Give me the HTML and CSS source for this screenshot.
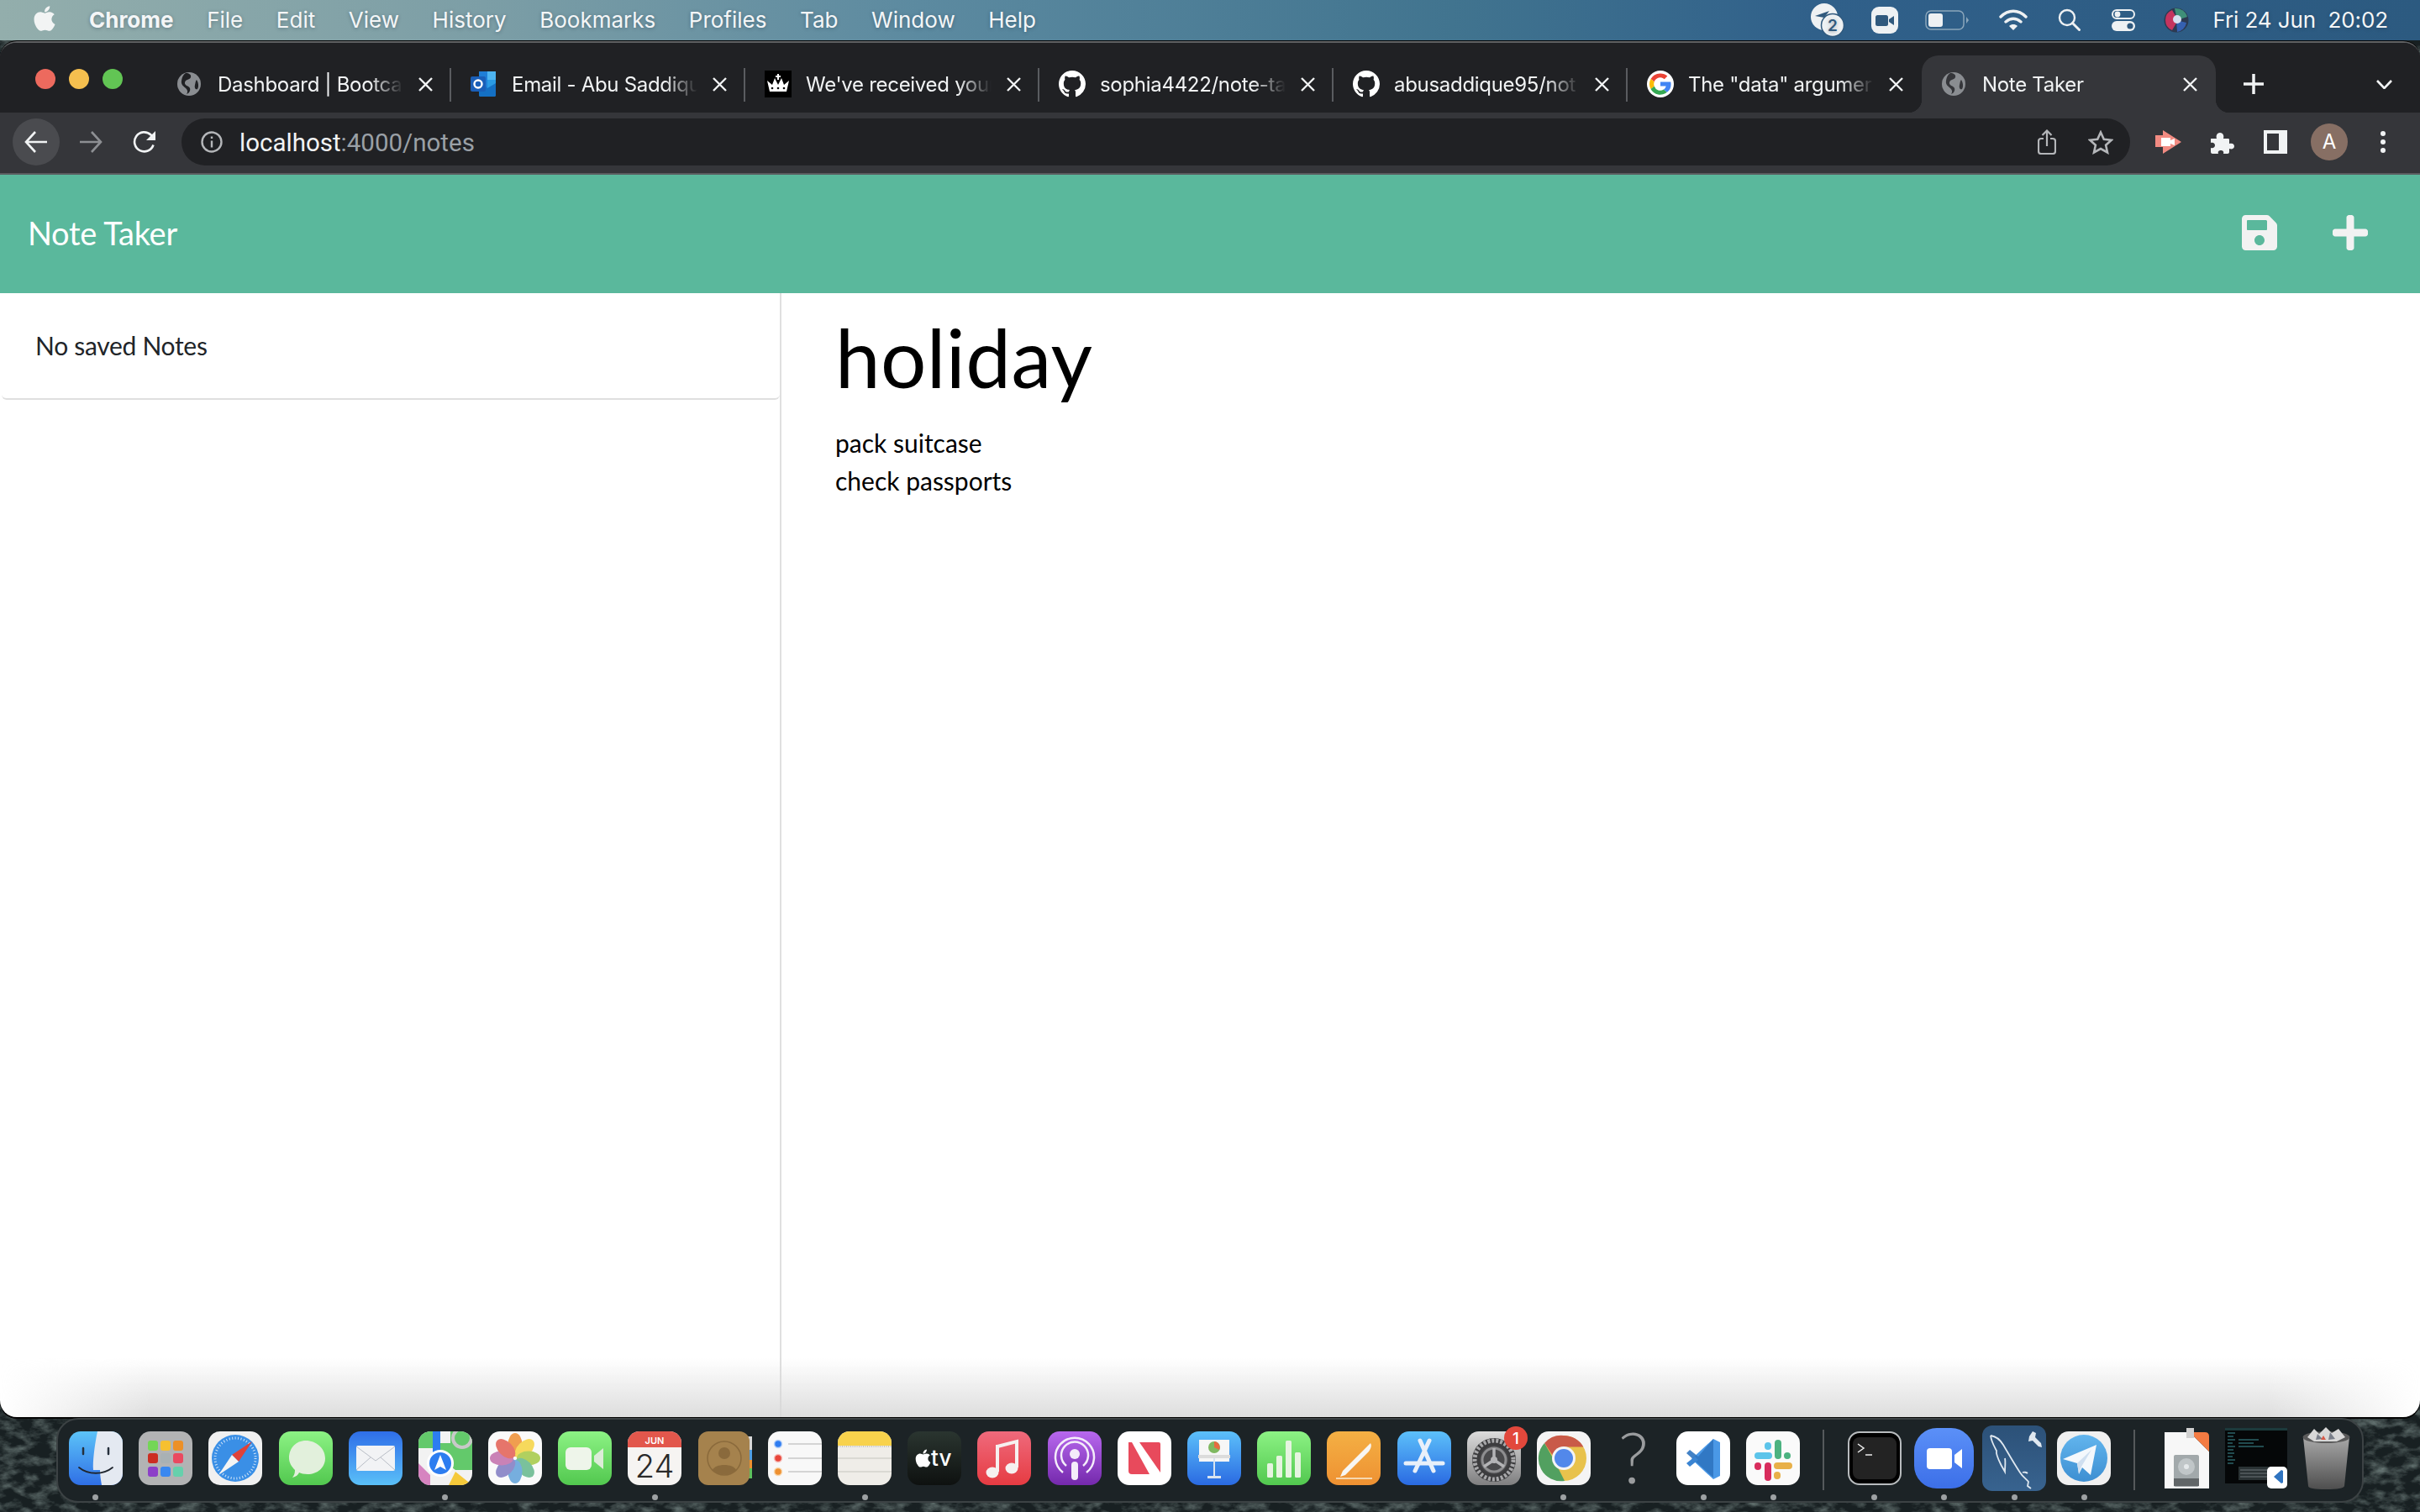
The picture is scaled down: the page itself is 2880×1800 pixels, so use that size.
FILE: index.html
```html
<!DOCTYPE html>
<html lang="en">
<head>
  <meta charset="UTF-8" />
  <title>Note Taker</title>
  <link rel="stylesheet" href="styles.css">
</head>
<body>
  <svg class="svg-defs" aria-hidden="true">
    <defs>
      <clipPath id="squircle"><rect width="64" height="64" rx="14"/></clipPath>
      <linearGradient id="gFinder" x1="0" y1="0" x2="0" y2="1"><stop offset="0" stop-color="#5cc3f8"/><stop offset="1" stop-color="#2f6fe6"/></linearGradient>
      <linearGradient id="gGreen" x1="0" y1="0" x2="0" y2="1"><stop offset="0" stop-color="#8cf284"/><stop offset="1" stop-color="#52c84f"/></linearGradient>
      <linearGradient id="gMail" x1="0" y1="0" x2="0" y2="1"><stop offset="0" stop-color="#2f6ee8"/><stop offset="1" stop-color="#5ac0f8"/></linearGradient>
      <linearGradient id="gMusic" x1="0" y1="0" x2="0" y2="1"><stop offset="0" stop-color="#ef6a7c"/><stop offset="1" stop-color="#e63b42"/></linearGradient>
      <linearGradient id="gPod" x1="0" y1="0" x2="0" y2="1"><stop offset="0" stop-color="#b868ee"/><stop offset="1" stop-color="#7429ac"/></linearGradient>
      <linearGradient id="gBlue" x1="0" y1="0" x2="0" y2="1"><stop offset="0" stop-color="#5cc0fa"/><stop offset="1" stop-color="#2a6ae2"/></linearGradient>
      <linearGradient id="gOrange" x1="0" y1="0" x2="0" y2="1"><stop offset="0" stop-color="#f4b044"/><stop offset="1" stop-color="#ee9132"/></linearGradient>
      <linearGradient id="gGray" x1="0" y1="0" x2="0" y2="1"><stop offset="0" stop-color="#dcdcdc"/><stop offset="1" stop-color="#7f7f80"/></linearGradient>
      <linearGradient id="gTv" x1="0" y1="0" x2="0" y2="1"><stop offset="0" stop-color="#2a3530"/><stop offset="1" stop-color="#0e1110"/></linearGradient>
      <linearGradient id="gZoom" x1="0" y1="0" x2="0" y2="1"><stop offset="0" stop-color="#5b90f8"/><stop offset="1" stop-color="#3c6fe8"/></linearGradient>
      <linearGradient id="gMysql" x1="0" y1="0" x2="0" y2="1"><stop offset="0" stop-color="#2c5178"/><stop offset="1" stop-color="#38638f"/></linearGradient>
      <linearGradient id="gTele" x1="0" y1="0" x2="0" y2="1"><stop offset="0" stop-color="#62b5ee"/><stop offset="1" stop-color="#3d8fd2"/></linearGradient>
      <linearGradient id="gTrash" x1="0" y1="0" x2="0" y2="1"><stop offset="0" stop-color="#a8a8a8"/><stop offset="1" stop-color="#4e4e4e"/></linearGradient>
      <filter id="rough" x="0" y="0" width="100%" height="100%"><feTurbulence type="fractalNoise" baseFrequency="0.05 0.09" numOctaves="4" seed="7"/><feColorMatrix values="0 0 0 0 0.19  0 0 0 0 0.25  0 0 0 0 0.24  1.7 0 0 0 -0.7"/></filter>
    </defs>
  </svg>

  <svg class="wallpaper" aria-hidden="true"><rect width="100%" height="100%" filter="url(#rough)"/></svg>

  <div class="desktop">
    <header class="menubar">
      <svg class="apple" viewBox="0 0 384 512"><path fill="#f2f4f4" d="M318.7 268.7c-.2-36.7 16.4-64.4 50-84.8-18.8-26.9-47.2-41.7-84.7-44.6-35.5-2.8-74.3 20.7-88.5 20.7-15 0-49.4-19.7-76.4-19.7C63.3 141.2 4 184.8 4 273.5q0 39.3 14.4 81.2c12.8 36.7 59 126.7 107.2 125.2 25.2-.6 43-17.9 75.8-17.9 31.8 0 48.3 17.9 76.4 17.9 48.6-.7 90.4-82.5 102.6-119.3-65.2-30.7-61.7-90-61.7-91.9zm-56.6-164.2c27.3-32.4 24.8-61.9 24-72.5-24.1 1.4-52 16.4-67.9 34.9-17.5 19.8-27.8 44.3-25.6 71.9 26.1 2 49.9-11.4 69.5-34.3z"/></svg>
      <nav class="menu">
        <span class="menu-app">Chrome</span>
        <span>File</span>
        <span>Edit</span>
        <span>View</span>
        <span>History</span>
        <span>Bookmarks</span>
        <span>Profiles</span>
        <span>Tab</span>
        <span>Window</span>
        <span>Help</span>
      </nav>
      <div class="status">
        <svg class="st-badge" viewBox="0 0 40 40"><circle cx="16" cy="16" r="16" fill="#eef1f3"/><path d="M5 15l17-6-6 8z" fill="#30597d"/><circle cx="26" cy="26" r="13.5" fill="#eef1f3" stroke="#30597d" stroke-width="1.5"/><text x="26" y="33" class="st-badge-num">2</text></svg>
        <svg class="st-zoom" viewBox="0 0 32 32"><rect width="32" height="32" rx="9" fill="#eef1f3"/><rect x="5" y="10" width="15" height="13" rx="2.5" fill="#30597d"/><path d="M21 15l6-4v11l-6-4z" fill="#30597d"/></svg>
        <svg class="st-battery" viewBox="0 0 52 24"><rect x="1" y="1" width="45" height="22" rx="6" fill="none" stroke="#8ba6bb" stroke-width="1.5"/><rect x="4" y="4" width="17" height="16" rx="3" fill="#eef1f3"/><path d="M49 8l3 4-3 4z" fill="#8ba6bb"/></svg>
        <svg class="st-wifi" viewBox="0 0 34 26"><path d="M2 9C11 0 23 0 32 9M8 15c6-5 12-5 18 0" fill="none" stroke="#eef1f3" stroke-width="3.4" stroke-linecap="round"/><path d="M12 20c3-2.6 7-2.6 10 0l-5 5z" fill="#eef1f3"/></svg>
        <svg class="st-search" viewBox="0 0 27 27"><circle cx="11" cy="11" r="9" fill="none" stroke="#eef1f3" stroke-width="2.4"/><path d="M17.5 17.5l8 8" stroke="#eef1f3" stroke-width="3" stroke-linecap="round"/></svg>
        <svg class="st-control" viewBox="0 0 28 26"><rect x="1" y="1" width="26" height="10" rx="5" fill="none" stroke="#eef1f3" stroke-width="2"/><circle cx="7" cy="6" r="3.4" fill="#eef1f3"/><rect y="14" width="28" height="12" rx="6" fill="#eef1f3"/><circle cx="22" cy="20" r="3.6" fill="#30597d"/></svg>
        <svg class="st-siri" viewBox="0 0 30 30"><circle cx="15" cy="15" r="14.5" fill="#2c3a52"/><path d="M2 15a13 13 0 0 1 8-12l7 12-7 12a13 13 0 0 1-8-12z" fill="#c6345f"/><path d="M13 1a14 14 0 0 1 15 10l-12 4z" fill="#3f8f78"/><path d="M15 15l12 3a13 13 0 0 1-11 11z" fill="#3560b0"/><circle cx="16" cy="14" r="5" fill="#d8dff0"/></svg>
        <span class="clock">Fri 24 Jun&nbsp; 20:02</span>
      </div>
    </header>

    <main class="window">
      <div class="tabstrip">
        <div class="lights"><i class="light-red"></i><i class="light-yellow"></i><i class="light-green"></i></div>
        <div class="tab">
          <svg class="fav fav-globe" viewBox="0 0 28 28"><circle cx="14" cy="14" r="14" fill="#8a8d91"/><path d="M10 1c4 0 7 2 6 5s-6 2-7 6 5 4 6 7-1 6-4 7c2-3 1-5-1-7S4 15 5 10s2-7 5-9zM23 9c2 3 3 8 1 11-2 1-4-1-3-5s1-5 2-6z" fill="#202124"/></svg>
          <span class="tab-title">Dashboard | Bootca</span>
          <svg class="tab-x" viewBox="0 0 17 17"><path d="M1 1l15 15M16 1L1 16"/></svg>
        </div>
        <div class="tab">
          <svg class="fav" viewBox="0 0 32 32"><path d="M10 1h20v28a2 2 0 0 1-2 2H12a2 2 0 0 1-2-2z" fill="#1f7ed6"/><path d="M20 1h10v10H20z" fill="#4db4f0"/><path d="M20 11h10v10H20z" fill="#2a9be4"/><path d="M10 11l10 10 10-6v14a2 2 0 0 1-2 2H12a2 2 0 0 1-2-2z" fill="#1470c4"/><rect y="7" width="18" height="18" rx="2" fill="#1a5fb8"/><circle cx="9" cy="16" r="4.5" fill="none" stroke="#fff" stroke-width="2.4"/></svg>
          <span class="tab-title">Email - Abu Saddiqu</span>
          <svg class="tab-x" viewBox="0 0 17 17"><path d="M1 1l15 15M16 1L1 16"/></svg>
        </div>
        <div class="tab">
          <svg class="fav" viewBox="0 0 32 32"><rect width="32" height="32" fill="#000"/><path d="M6 25l-3-13 6 5 3-8 4 8 4-8 3 8 6-5-3 13z" fill="#fff"/><path d="M15 4h2v2h2v2h-2v3h-2V8h-2V6h2z" fill="#fff"/><circle cx="9" cy="21" r="1.3"/><circle cx="16" cy="21" r="1.3"/><circle cx="23" cy="21" r="1.3"/></svg>
          <span class="tab-title">We've received your</span>
          <svg class="tab-x" viewBox="0 0 17 17"><path d="M1 1l15 15M16 1L1 16"/></svg>
        </div>
        <div class="tab">
          <svg class="fav" viewBox="0 0 16 16"><path fill="#fff" d="M8 0C3.58 0 0 3.58 0 8c0 3.54 2.29 6.53 5.47 7.59.4.07.55-.17.55-.38 0-.19-.01-.82-.01-1.49-2.01.37-2.53-.49-2.69-.94-.09-.23-.48-.94-.82-1.13-.28-.15-.68-.52-.01-.53.63-.01 1.08.58 1.23.82.72 1.21 1.87.87 2.33.66.07-.52.28-.87.51-1.07-1.78-.2-3.64-.89-3.64-3.95 0-.87.31-1.59.82-2.15-.08-.2-.36-1.02.08-2.12 0 0 .67-.21 2.2.82.64-.18 1.32-.27 2-.27.68 0 1.36.09 2 .27 1.53-1.04 2.2-.82 2.2-.82.44 1.1.16 1.92.08 2.12.51.56.82 1.27.82 2.15 0 3.07-1.87 3.75-3.65 3.95.29.25.54.73.54 1.48 0 1.07-.01 1.93-.01 2.2 0 .21.15.46.55.38A8.013 8.013 0 0016 8c0-4.42-3.58-8-8-8z"/></svg>
          <span class="tab-title">sophia4422/note-ta</span>
          <svg class="tab-x" viewBox="0 0 17 17"><path d="M1 1l15 15M16 1L1 16"/></svg>
        </div>
        <div class="tab">
          <svg class="fav" viewBox="0 0 16 16"><path fill="#fff" d="M8 0C3.58 0 0 3.58 0 8c0 3.54 2.29 6.53 5.47 7.59.4.07.55-.17.55-.38 0-.19-.01-.82-.01-1.49-2.01.37-2.53-.49-2.69-.94-.09-.23-.48-.94-.82-1.13-.28-.15-.68-.52-.01-.53.63-.01 1.08.58 1.23.82.72 1.21 1.87.87 2.33.66.07-.52.28-.87.51-1.07-1.78-.2-3.64-.89-3.64-3.95 0-.87.31-1.59.82-2.15-.08-.2-.36-1.02.08-2.12 0 0 .67-.21 2.2.82.64-.18 1.32-.27 2-.27.68 0 1.36.09 2 .27 1.53-1.04 2.2-.82 2.2-.82.44 1.1.16 1.92.08 2.12.51.56.82 1.27.82 2.15 0 3.07-1.87 3.75-3.65 3.95.29.25.54.73.54 1.48 0 1.07-.01 1.93-.01 2.2 0 .21.15.46.55.38A8.013 8.013 0 0016 8c0-4.42-3.58-8-8-8z"/></svg>
          <span class="tab-title">abusaddique95/not</span>
          <svg class="tab-x" viewBox="0 0 17 17"><path d="M1 1l15 15M16 1L1 16"/></svg>
        </div>
        <div class="tab tab-nosep">
          <svg class="fav" viewBox="0 0 32 32"><circle cx="16" cy="16" r="16" fill="#fff"/><g transform="translate(16 16) scale(1.4) translate(-16 -16)"><path d="M16 7a9 9 0 0 1 6 2.3l-2.6 2.6A5.4 5.4 0 0 0 10.800 14L7.800 11.800A9 9 0 0 1 16 7z" fill="#ea4335"/><path d="M7.800 11.800l3 2.200a5.400 5.400 0 0 0 0 4l-3 2.300a9 9 0 0 1 0-8.500z" fill="#fbbc05"/><path d="M10.800 18a5.400 5.400 0 0 0 8 2.700l2.900 2.200A9 9 0 0 1 7.800 20.300z" fill="#34a853"/><path d="M25 16.500c0 2.700-1.200 5-3.300 6.400l-2.900-2.200a5 5 0 0 0 2-3H16v-3.500h8.800c.1.700.2 1.500.2 2.300z" fill="#4285f4"/></g></svg>
          <span class="tab-title">The "data" argumer</span>
          <svg class="tab-x" viewBox="0 0 17 17"><path d="M1 1l15 15M16 1L1 16"/></svg>
        </div>
        <div class="tab tab-active">
          <svg class="fav fav-globe" viewBox="0 0 28 28"><circle cx="14" cy="14" r="14" fill="#8a8d91"/><path d="M10 1c4 0 7 2 6 5s-6 2-7 6 5 4 6 7-1 6-4 7c2-3 1-5-1-7S4 15 5 10s2-7 5-9zM23 9c2 3 3 8 1 11-2 1-4-1-3-5s1-5 2-6z" fill="#35363a"/></svg>
          <span class="tab-title">Note Taker</span>
          <svg class="tab-x" viewBox="0 0 17 17"><path d="M1 1l15 15M16 1L1 16"/></svg>
        </div>
        <svg class="newtab" viewBox="0 0 24 24"><path d="M12 0v24M0 12h24"/></svg>
        <svg class="tabmenu" viewBox="0 0 19 11"><path d="M1 1l8.500 9L18 1"/></svg>
      </div>

      <div class="toolbar">
        <span class="nav-back"><svg class="nav-icon" viewBox="0 0 28 26"><path d="M27 13H3M13 1L2 13l11 12"/></svg></span>
        <svg class="nav-icon nav-fwd" viewBox="0 0 28 26"><path d="M1 13h24M15 1l11 12-11 12"/></svg>
        <svg class="nav-icon nav-reload" viewBox="0 0 28 28"><path d="M24.500 17.500A11.500 11.500 0 1 1 21.500 5.500L25 9"/><path class="solid" d="M27 1v11H16z"/></svg>
        <div class="omnibox">
          <svg class="info" viewBox="0 0 26 26"><circle cx="13" cy="13" r="11.500"/><path d="M13 11.500v8M13 6.500v2.500"/></svg>
          <span class="url">localhost<span class="url-dim">:4000/notes</span></span>
          <svg class="omni-share" viewBox="0 0 22 30"><path d="M7 11H4a3 3 0 0 0-3 3v12a3 3 0 0 0 3 3h14a3 3 0 0 0 3-3V14a3 3 0 0 0-3-3h-3M11 20V2M5.500 7L11 1.500 16.500 7"/></svg>
          <svg class="omni-star" viewBox="0 0 30 29"><path d="M15 2.500l3.800 8.200 9 1-6.700 6 1.900 8.800-8-4.500-8 4.500 1.900-8.800-6.700-6 9-1z"/></svg>
        </div>
        <svg class="ext-video" viewBox="0 0 32 28"><path d="M10 6h-9v14h9z" fill="#f28b82"/><path d="M10 0l22 14-22 14z" fill="#f28b82"/><rect x="8" y="9" width="11" height="10" fill="#fff"/><path d="M19 12l5-2v8l-5-2z" fill="#fff"/></svg>
        <svg class="ext-puzzle" viewBox="0 0 30 30"><path fill="#f1f3f4" d="M2 11h6c-1-3 0-7 4-7s5 4 4 7h6c1 0 1 1 1 2v4c3-1 6 0 6 3s-3 4-6 3v4c0 1-1 2-2 2h-5c1-3-1-4-3-4s-4 1-3 4H3c-1 0-2-1-2-2v-5c3 1 5-1 5-3s-2-4-5-3v-4c0-1 0-1 1-1z"/></svg>
        <svg class="ext-side" viewBox="0 0 28 28"><path fill="#f1f3f4" d="M0 0h28v28H0zM4 4v20h14V4z" fill-rule="evenodd"/></svg>
        <span class="avatar">A</span>
        <svg class="kebab" viewBox="0 0 6 26"><circle cx="3" cy="3" r="3"/><circle cx="3" cy="13" r="3"/><circle cx="3" cy="23" r="3"/></svg>
      </div>

      <div class="page">
        <div class="navbar">
          <a class="navbar-brand">Note Taker</a>
          <div class="navbar-icons">
            <svg class="icon-save" viewBox="0 0 448 512"><path d="M433.941 129.941l-83.882-83.882A48 48 0 0 0 316.118 32H48C21.49 32 0 53.49 0 80v352c0 26.51 21.49 48 48 48h352c26.51 0 48-21.49 48-48V163.882a48 48 0 0 0-14.059-33.941zM224 416c-35.346 0-64-28.654-64-64 0-35.346 28.654-64 64-64s64 28.654 64 64c0 35.346-28.654 64-64 64zm96-304.520V212c0 6.627-5.373 12-12 12H76c-6.627 0-12-5.373-12-12V108c0-6.627 5.373-12 12-12h228.520c3.183 0 6.235 1.264 8.485 3.515l3.480 3.480A11.996 11.996 0 0 1 320 111.480z"/></svg>
            <svg class="icon-plus" viewBox="0 0 448 448"><path d="M416 176H272V32c0-17.670-14.330-32-32-32h-32c-17.670 0-32 14.330-32 32v144H32c-17.670 0-32 14.330-32 32v32c0 17.670 14.330 32 32 32h144v144c0 17.670 14.330 32 32 32h32c17.670 0 32-14.330 32-32V272h144c17.670 0 32-14.330 32-32v-32c0-17.670-14.330-32-32-32z"/></svg>
          </div>
        </div>
        <div class="content">
          <aside class="sidebar">
            <ul class="list-group">
              <li class="list-group-item">No saved Notes</li>
            </ul>
          </aside>
          <section class="note">
            <h1 class="note-title">holiday</h1>
            <p class="note-text">pack suitcase<br>check passports</p>
          </section>
        </div>
        <div class="page-fade"></div>
      </div>
    </main>

    <footer class="dock">
      <div class="slot on"><span class="ic"><svg viewBox="0 0 64 64"><rect width="64" height="64" rx="14" fill="url(#gFinder)"/><path d="M34 0h16a14 14 0 0 1 14 14v36a14 14 0 0 1-14 14H39c-1-6-2-12-2-18h-8c-1-10 2-32 5-46z" fill="#e4e9f1"/><path d="M17 20v7M47 20v7" stroke="#25303c" stroke-width="2.500" stroke-linecap="round"/><path d="M12 43c11 9 29 9 40 0" fill="none" stroke="#20262e" stroke-width="1.800" stroke-linecap="round"/></svg></span><i class="dot"></i></div>
      <div class="slot"><span class="ic"><svg viewBox="0 0 64 64"><rect width="64" height="64" rx="14" fill="#b2b3b4"/><rect x="11" y="11" width="12" height="12" rx="3" fill="#74d656"/><rect x="26" y="11" width="12" height="12" rx="3" fill="#f6c030"/><rect x="41" y="11" width="12" height="12" rx="3" fill="#ec9028"/><rect x="11" y="26" width="12" height="12" rx="3" fill="#cc2d22"/><rect x="26" y="26" width="12" height="12" rx="3" fill="#a9b1b4"/><rect x="41" y="26" width="12" height="12" rx="3" fill="#ea4a60"/><rect x="11" y="42" width="12" height="12" rx="3" fill="#8c3fc8"/><rect x="26" y="42" width="12" height="12" rx="3" fill="#3a88f0"/><rect x="41" y="42" width="12" height="12" rx="3" fill="#66d0ac"/></svg></span><i class="dot dot-off"></i></div>
      <div class="slot"><span class="ic"><svg viewBox="0 0 64 64"><rect width="64" height="64" rx="14" fill="#f0f0f0"/><circle cx="32" cy="32" r="28" fill="#3a8fe6"/><circle cx="32" cy="32" r="24" fill="none" stroke="#cfe4f8" stroke-width="3" stroke-dasharray="1 2.500"/><path d="M52 12L28 28l8 8z" fill="#e0423a"/><path d="M12 52l24-16-8-8z" fill="#f4f4f4"/></svg></span><i class="dot dot-off"></i></div>
      <div class="slot"><span class="ic"><svg viewBox="0 0 64 64"><rect width="64" height="64" rx="14" fill="url(#gGreen)"/><path d="M32 11c12 0 23 9 23 21 0 11-9 19-21 19-4 0-8-1-10-2-1 3-4 5-8 6 2-3 3-5 3-9-4-4-7-9-7-14 0-12 8-21 20-21z" fill="#e2f0dc"/></svg></span><i class="dot dot-off"></i></div>
      <div class="slot"><span class="ic"><svg viewBox="0 0 64 64"><rect width="64" height="64" rx="14" fill="url(#gMail)"/><rect x="9" y="17" width="46" height="30" rx="2" fill="#f2f3f5"/><path d="M9 18l23 17 23-17M9 46l17-15M55 46L38 31" fill="none" stroke="#b9bec6" stroke-width="1"/></svg></span><i class="dot dot-off"></i></div>
      <div class="slot on"><span class="ic"><svg viewBox="0 0 64 64"><g clip-path="url(#squircle)"><rect width="64" height="64" fill="#f2f2f2"/><path d="M0 0h20v20H0z" fill="#63c96b"/><path d="M38 0h26v46H44L20 28V14h18z" fill="#63c96b"/><path d="M17 0h9v32h-9z" fill="#2d7df0"/><path d="M0 38l14 14v12H0z" fill="#d684c0"/><path d="M36 64l8-16 20 16z" fill="#f5c93a"/><circle cx="52" cy="8" r="11" fill="none" stroke="#c8c8c8" stroke-width="4"/><circle cx="26" cy="38" r="16" fill="#fff"/><circle cx="26" cy="38" r="13" fill="#2d7df0"/><path d="M26 28l7 18-7-4-7 4z" fill="#fff"/></g></svg></span><i class="dot"></i></div>
      <div class="slot"><span class="ic"><svg viewBox="0 0 64 64"><rect width="64" height="64" rx="14" fill="#fafafa"/><g transform="translate(32 32)" opacity=".82"><ellipse cy="-16" rx="8.500" ry="14" fill="#ef8a2a"/><ellipse cy="-16" rx="8.500" ry="14" fill="#f6d23a" transform="rotate(45)"/><ellipse cy="-16" rx="8.500" ry="14" fill="#a2c83e" transform="rotate(90)"/><ellipse cy="-16" rx="8.500" ry="14" fill="#5eb588" transform="rotate(135)"/><ellipse cy="-16" rx="8.500" ry="14" fill="#5a9ed8" transform="rotate(180)"/><ellipse cy="-16" rx="8.500" ry="14" fill="#7a76c0" transform="rotate(225)"/><ellipse cy="-16" rx="8.500" ry="14" fill="#c068a8" transform="rotate(270)"/><ellipse cy="-16" rx="8.500" ry="14" fill="#e2584c" transform="rotate(315)"/></g></svg></span><i class="dot dot-off"></i></div>
      <div class="slot"><span class="ic"><svg viewBox="0 0 64 64"><rect width="64" height="64" rx="14" fill="url(#gGreen)"/><rect x="9" y="19" width="31" height="27" rx="6" fill="#eef5ea"/><path d="M43 29l11-9v25l-11-9z" fill="#dcecd8"/></svg></span><i class="dot dot-off"></i></div>
      <div class="slot on"><span class="ic"><svg viewBox="0 0 64 64"><rect width="64" height="64" rx="14" fill="#f6f4f2"/><path d="M0 19V14A14 14 0 0 1 14 0h36a14 14 0 0 1 14 14v5z" fill="#e2574c"/><text x="32" y="15" class="cal-month">JUN</text><text x="32" y="55" class="cal-day">24</text></svg></span><i class="dot"></i></div>
      <div class="slot"><span class="ic"><svg viewBox="0 0 64 64"><rect x="59" y="6" width="5" height="16" fill="#d8d8d8"/><rect x="59" y="22" width="5" height="12" fill="#4f9fe6"/><rect x="59" y="34" width="5" height="10" fill="#ee9030"/><rect x="59" y="44" width="5" height="12" fill="#5cc05c"/><rect width="61" height="64" rx="12" fill="#a5824d"/><circle cx="31" cy="32" r="20" fill="none" stroke="#8a6a3c" stroke-width="1.500"/><circle cx="31" cy="26" r="7" fill="#8a6a3c"/><path d="M17 46c3-8 25-8 28 0-7 7-21 7-28 0z" fill="#8a6a3c"/></svg></span><i class="dot dot-off"></i></div>
      <div class="slot"><span class="ic"><svg viewBox="0 0 64 64"><rect width="64" height="64" rx="14" fill="#f8f8f8"/><circle cx="12" cy="15" r="4.500" fill="#2f7cf0" stroke="#b8d2f8" stroke-width="1.500"/><circle cx="12" cy="32" r="4.500" fill="#e8453a" stroke="#f6c0bc" stroke-width="1.500"/><circle cx="12" cy="48" r="4.500" fill="#ee9030" stroke="#f8d8b0" stroke-width="1.500"/><path d="M24 15h40M24 32h40M24 48h40" stroke="#c8c8c8" stroke-width="1.500"/></svg></span><i class="dot dot-off"></i></div>
      <div class="slot on"><span class="ic"><svg viewBox="0 0 64 64"><rect width="64" height="64" rx="14" fill="#efede8"/><path d="M0 17V14A14 14 0 0 1 14 0h36a14 14 0 0 1 14 14v3z" fill="#f8d24c"/><path d="M0 32h64M0 48h64" stroke="#d4d2cc" stroke-width="1.500"/><path d="M0 18h64" stroke="#b8b6b0" stroke-width="1.500" stroke-dasharray="1 1.500"/></svg></span><i class="dot"></i></div>
      <div class="slot"><span class="ic"><svg viewBox="0 0 64 64"><rect width="64" height="64" rx="14" fill="url(#gTv)"/><svg x="9" y="20" width="19" height="24" viewBox="0 0 384 512"><path fill="#fff" d="M318.7 268.7c-.2-36.7 16.4-64.4 50-84.8-18.8-26.9-47.2-41.7-84.7-44.6-35.5-2.8-74.3 20.7-88.5 20.7-15 0-49.4-19.7-76.4-19.7C63.3 141.2 4 184.8 4 273.5q0 39.3 14.4 81.2c12.8 36.7 59 126.7 107.2 125.2 25.2-.6 43-17.9 75.8-17.9 31.8 0 48.3 17.9 76.4 17.9 48.6-.7 90.4-82.5 102.6-119.3-65.2-30.7-61.7-90-61.7-91.9zm-56.6-164.2c27.3-32.4 24.8-61.9 24-72.5-24.1 1.4-52 16.4-67.9 34.9-17.5 19.8-27.800 44.3-25.6 71.9 26.1 2 49.9-11.4 69.5-34.3z"/></svg><text x="28" y="41" class="tv-label">tv</text></svg></span><i class="dot dot-off"></i></div>
      <div class="slot"><span class="ic"><svg viewBox="0 0 64 64"><rect width="64" height="64" rx="14" fill="url(#gMusic)"/><path d="M24 18l23-6v31" fill="none" stroke="#f6f0f0" stroke-width="4"/><path d="M24 16v32" stroke="#f6f0f0" stroke-width="4"/><ellipse cx="18" cy="49" rx="7.500" ry="6.500" fill="#f6f0f0"/><ellipse cx="41" cy="44" rx="7.500" ry="6.500" fill="#f6f0f0"/></svg></span><i class="dot dot-off"></i></div>
      <div class="slot"><span class="ic"><svg viewBox="0 0 64 64"><rect width="64" height="64" rx="14" fill="url(#gPod)"/><g fill="none" stroke="#f4ecfa" stroke-width="2.500"><path d="M18 49a23 23 0 1 1 28 0"/><path d="M22 41a16 16 0 1 1 20 0"/></g><circle cx="32" cy="27" r="6" fill="#f4ecfa"/><rect x="28" y="36" width="8" height="22" rx="4" fill="#f4ecfa"/></svg></span><i class="dot dot-off"></i></div>
      <div class="slot"><span class="ic"><svg viewBox="0 0 64 64"><rect width="64" height="64" rx="14" fill="#fff"/><path d="M13 13h4l21 38H17a4 4 0 0 1-4-4z" fill="#e84a5c"/><path d="M26 13h23a2 2 0 0 1 2 2v34z" fill="#e84a5c"/></svg></span><i class="dot dot-off"></i></div>
      <div class="slot"><span class="ic"><svg viewBox="0 0 64 64"><rect width="64" height="64" rx="14" fill="url(#gBlue)"/><path d="M14 10h36v26H14z" fill="#f6f6f6"/><rect x="13" y="28" width="38" height="4" fill="#dcdcdc"/><circle cx="32" cy="19" r="7" fill="#7fb860"/><path d="M32 12a7 7 0 0 1 6 10l-6-3z" fill="#e66a40"/><path d="M31 32h2v24h-2z" fill="#d8e4f0"/><rect x="24" y="53" width="16" height="3" fill="#d8e4f0"/></svg></span><i class="dot dot-off"></i></div>
      <div class="slot"><span class="ic"><svg viewBox="0 0 64 64"><rect width="64" height="64" rx="14" fill="url(#gGreen)"/><rect x="12" y="38" width="7" height="17" rx="1.500" fill="#e6f4e0"/><rect x="23" y="29" width="7" height="26" rx="1.500" fill="#e6f4e0"/><rect x="34" y="11" width="7" height="44" rx="1.500" fill="#e6f4e0"/><rect x="45" y="25" width="7" height="30" rx="1.500" fill="#e6f4e0"/></svg></span><i class="dot dot-off"></i></div>
      <div class="slot"><span class="ic"><svg viewBox="0 0 64 64"><rect width="64" height="64" rx="14" fill="url(#gOrange)"/><path d="M52 14c2 3 0 7-2 10L22 52l-6 2 3-7z" fill="#f8f6f2"/><path d="M11 55h43v2H11z" fill="#f6d8b0"/></svg></span><i class="dot dot-off"></i></div>
      <div class="slot"><span class="ic"><svg viewBox="0 0 64 64"><rect width="64" height="64" rx="14" fill="url(#gBlue)"/><g stroke="#e8f0fa" stroke-width="5" stroke-linecap="round" fill="none"><path d="M38 11L21 47"/><path d="M27 11l16 36"/><path d="M10 38h44"/></g></svg></span><i class="dot dot-off"></i></div>
      <div class="slot"><span class="ic"><svg class="ic-over" viewBox="0 0 64 64"><rect width="64" height="64" rx="14" fill="url(#gGray)"/><circle cx="32" cy="34" r="26" fill="#3c3c3e"/><circle cx="32" cy="34" r="23" fill="none" stroke="#a8a8aa" stroke-width="5" stroke-dasharray="3 2"/><circle cx="32" cy="34" r="17" fill="#4a4a4c"/><circle cx="32" cy="34" r="14" fill="none" stroke="#8e8e90" stroke-width="3"/><path d="M32 34V20M32 34l12 8M32 34l-12 8" stroke="#b4b4b6" stroke-width="3.500"/><circle cx="32" cy="34" r="4" fill="#b4b4b6"/><circle cx="58" cy="8" r="14" fill="#e2483c"/><text x="58" y="15" class="dock-badge">1</text></svg></span><i class="dot dot-off"></i></div>
      <div class="slot on"><span class="ic"><svg viewBox="0 0 64 64"><rect width="64" height="64" rx="14" fill="#f4f4f4"/><circle cx="32" cy="32" r="27" fill="#e8c24c"/><path d="M32 5a27 27 0 0 1 23.400 13.500H32A13.500 13.500 0 0 0 19 29L9 14A27 27 0 0 1 32 5z" fill="#c95a48"/><path d="M9 14l13 23 11 22A27 27 0 0 1 9 14z" fill="#52a060"/><circle cx="32" cy="32" r="14" fill="#f4f4f4"/><circle cx="32" cy="32" r="11" fill="#5288ea"/></svg></span><i class="dot"></i></div>
      <div class="slot"><span class="ic"><svg class="ic-over" viewBox="0 0 64 64"><text x="32" y="62" class="help-mark">?</text></svg></span><i class="dot dot-off"></i></div>
      <div class="slot on"><span class="ic"><svg viewBox="0 0 64 64"><rect width="64" height="64" rx="14" fill="#fff"/><path d="M44 9l-26 24 26 24 8-4V13z" fill="#4a98e6"/><path d="M44 9v46L12 26l4-4 10 8z" fill="#2f74c0" opacity=".9"/><path d="M12 38l4 4 10-8-4-4z" fill="#3a84d2"/></svg></span><i class="dot"></i></div>
      <div class="slot on"><span class="ic"><svg viewBox="0 0 64 64"><rect width="64" height="64" rx="14" fill="#fafafa"/><rect x="10" y="25" width="21" height="8" rx="4" fill="#5cc4ea"/><rect x="22" y="13" width="8" height="9" rx="4" fill="#5cc4ea"/><rect x="34" y="10" width="8" height="23" rx="4" fill="#4cb280"/><rect x="45" y="25" width="8" height="8" rx="4" fill="#4cb280"/><rect x="33" y="37" width="22" height="8" rx="4" fill="#e8b048"/><rect x="33" y="48" width="8" height="9" rx="4" fill="#e8b048"/><rect x="22" y="37" width="8" height="22" rx="4" fill="#d82c5c"/><rect x="10" y="37" width="8" height="9" rx="4" fill="#d82c5c"/></svg></span><i class="dot"></i></div>
      <div class="dock-sep"></div>
      <div class="slot on"><span class="ic"><svg viewBox="0 0 64 64"><rect x="1" y="1" width="62" height="62" rx="13" fill="#000" stroke="#b8bcbe" stroke-width="2"/><rect x="6" y="7" width="52" height="50" rx="8" fill="#232323"/><path d="M12 15l7 5-7 5" fill="none" stroke="#eee" stroke-width="1.500"/><path d="M21 28h8" stroke="#eee" stroke-width="1.500"/></svg></span><i class="dot"></i></div>
      <div class="slot on"><span class="ic"><svg class="ic-zoom" viewBox="0 0 71 72"><rect width="71" height="72" rx="27" fill="url(#gZoom)"/><rect x="15" y="24" width="30" height="25" rx="4" fill="#fff"/><path d="M48 32l9-7v23l-9-7z" fill="#fff"/></svg></span><i class="dot"></i></div>
      <div class="slot on"><span class="ic"><svg class="ic-mysql" viewBox="0 0 76 78"><rect width="76" height="78" rx="12" fill="url(#gMysql)"/><path d="M10 12c7 1 12 6 15 11 7 12 14 24 20 33 3 5 8 8 10 11l-1 5 4 3M10 12c1 8 5 14 7 18-1 5 3 12 6 18l4 7c0-6 1-11 0-16M48 56c2-1 5 0 6 1" fill="none" stroke="#dfe8f0" stroke-width="1.800"/><path d="M60 7l4 2-1 5 7 7 1 5-4-1-7-7-5 1 1-6z" fill="#dfe8f0"/></svg></span><i class="dot"></i></div>
      <div class="slot on"><span class="ic"><svg viewBox="0 0 64 64"><rect width="64" height="64" rx="14" fill="#f0f0f0"/><circle cx="32" cy="32" r="28" fill="url(#gTele)"/><path d="M7 33l40-17-7 36-10-9-4 8-2-13z" fill="#f4f8fc"/><path d="M24 38l17-16-12 20-3 8z" fill="#cfdff0"/></svg></span><i class="dot"></i></div>
      <div class="dock-sep dock-sep-wide"></div>
      <div class="slot"><span class="ic"><svg class="ic-file" viewBox="0 0 53 72"><path d="M0 5h30l23 23v44H0z" fill="#f7f7f7"/><path d="M30 5l23 23V10q0-5-5-5z" fill="#f47b42"/><path d="M26 0h9v12h-9z" fill="#d0d0d0"/><rect x="11" y="32" width="30" height="38" rx="2" fill="#a2a9ab"/><circle cx="26" cy="46" r="10" fill="#c0c6c8"/><circle cx="26" cy="46" r="3" fill="#e4e8ea"/><rect x="11" y="60" width="30" height="9" fill="#616668"/></svg></span><i class="dot dot-off"></i></div>
      <div class="slot"><span class="ic"><svg class="ic-shot" viewBox="0 0 76 72"><rect y="0" width="74" height="66" fill="#050708"/><rect x="0" y="0" width="74" height="3" fill="#1c3a3c"/><path d="M3 6h9M3 10h7M3 14h9M3 18h6M3 22h9M3 26h7M3 30h8M3 34h6M3 38h9M3 42h7M16 14h24M16 18h18M16 22h30" stroke="#3f8f96" stroke-width="1.200"/><rect x="16" y="46" width="54" height="16" fill="#2a3234"/><path d="M18 50h46M18 54h46M18 58h46" stroke="#6c7478" stroke-width="1"/><rect x="50" y="46" width="24" height="26" rx="5" fill="#fff"/><path d="M67 50l-9 8 9 8 2-1V51zM52 54l15 10M52 62l5-4" fill="#2f74c0"/></svg></span><i class="dot dot-off"></i></div>
      <div class="slot"><span class="ic"><svg class="ic-trash" viewBox="0 0 57 74"><path d="M1 12h55l-6 58q-1 4-22 4T7 70z" fill="url(#gTrash)"/><ellipse cx="28.500" cy="12" rx="28" ry="7" fill="#5a5a5a"/><path d="M6 12l8-10 6 6 8-8 7 7 8-5 8 10-10 5H14z" fill="#d8d8d8"/><path d="M18 8l6 6-8 1zM33 6l6 8-8 1z" fill="#7a7f8a"/><path d="M25 10l3 5h-6z" fill="#d65a4a"/></svg></span><i class="dot dot-off"></i></div>
    </footer>
  </div>
</body>
</html>
```

FILE: styles.css
```css
html, body {
  margin: 0;
  padding: 0;
}
body {
  width: 2880px;
  height: 1800px;
  overflow: hidden;
  position: relative;
  background: #182022;
  font-family: Inter, "Liberation Sans", sans-serif;
}
.svg-defs {
  position: absolute;
  width: 0;
  height: 0;
}
.wallpaper {
  position: absolute;
  left: 0;
  top: 0;
  width: 2880px;
  height: 1800px;
}
.desktop {
  position: relative;
  display: flex;
  flex-direction: column;
  height: 1800px;
}

/* mac menu bar */
.menubar {
  height: 48px;
  flex: none;
  display: flex;
  align-items: center;
  padding: 0 38px 1px 40px;
  box-sizing: border-box;
  background: linear-gradient(90deg, #93aeac 0%, #7c9ea6 20%, #5c8aa0 38%, #41748f 60%, #30608a 75%, #2c5a80 100%);
  color: #f4f6f7;
  font-size: 26px;
  text-shadow: 0 1px 4px rgba(20, 40, 60, 0.35);
}
.apple {
  width: 26px;
  height: 34px;
  margin-right: 40px;
  margin-top: -4px;
}
.menu {
  display: flex;
  gap: 39.6px;
}
.menu-app {
  font-weight: 700;
}
.status {
  margin-left: auto;
  display: flex;
  align-items: center;
}
.status svg {
  display: block;
}
.st-badge { width: 40px; height: 40px; margin-right: 32px; }
.st-badge-num { font: 600 19px Inter, sans-serif; text-anchor: middle; fill: #30597d; }
.st-zoom { width: 32px; height: 32px; margin-right: 32px; }
.st-battery { width: 52px; height: 24px; margin-right: 36px; }
.st-wifi { width: 34px; height: 26px; margin-right: 36px; }
.st-search { width: 27px; height: 27px; margin-right: 37px; }
.st-control { width: 28px; height: 26px; margin-right: 34px; }
.st-siri { width: 30px; height: 30px; margin-right: 29px; }
.clock {
  white-space: nowrap;
  letter-spacing: -0.1px;
}

/* browser window */
.window {
  flex: none;
  height: 1638px;
  margin-top: 1px;
  display: flex;
  flex-direction: column;
  border-radius: 20px;
  overflow: hidden;
  background: #202124;
  border-top: 2px solid #5f6163;
  box-sizing: border-box;
  box-shadow: 0 2px 0 #050505, 0 -1px 0 #050505;
}
.tabstrip {
  flex: none;
  height: 83px;
  padding-top: 15px;
  box-sizing: border-box;
  display: flex;
  background: #202124;
  color: #f1f3f4;
  font-size: 24px;
  letter-spacing: -0.3px;
}
.lights {
  width: 187px;
  flex: none;
  display: flex;
  gap: 16px;
  padding: 16px 0 0 42px;
  box-sizing: border-box;
}
.lights i {
  display: block;
  width: 24px;
  height: 24px;
  border-radius: 50%;
}
.light-red { background: #ed6a5e; }
.light-yellow { background: #f5bf4f; }
.light-green { background: #62c554; }
.tab {
  flex: none;
  width: 350px;
  height: 68px;
  display: flex;
  align-items: center;
  padding-left: 23px;
  box-sizing: border-box;
  position: relative;
}
.tab::after {
  content: "";
  position: absolute;
  right: 0;
  top: 15px;
  width: 2px;
  height: 40px;
  background: #5a5c60;
}
.tab-nosep::after {
  display: none;
}
.fav {
  flex: none;
  width: 32px;
  height: 32px;
  margin-right: 17px;
}
.fav-globe {
  width: 28px;
  height: 28px;
  margin: 0 20px 0 1px;
}
.tab-title {
  width: 221px;
  flex: none;
  white-space: nowrap;
  -webkit-mask-image: linear-gradient(90deg, #000 82%, transparent 100%);
  mask-image: linear-gradient(90deg, #000 82%, transparent 100%);
}
.tab-x {
  flex: none;
  width: 17px;
  height: 17px;
  margin-left: 18px;
  fill: none;
  stroke: #f1f3f4;
  stroke-width: 2.4;
}
.tab-active {
  background: #35363a;
  border-radius: 20px 20px 0 0;
}
.tab-active::before,
.tab-active::after {
  content: "";
  display: block;
  position: absolute;
  bottom: 0;
  top: auto;
  width: 16px;
  height: 16px;
}
.tab-active::before {
  left: -16px;
  background: radial-gradient(circle at 0 0, transparent 16px, #35363a 16.5px);
}
.tab-active::after {
  right: -16px;
  background: radial-gradient(circle at 100% 0, transparent 16px, #35363a 16.5px);
}
.newtab {
  width: 24px;
  height: 24px;
  margin: 22px 0 0 33px;
  fill: none;
  stroke: #f1f3f4;
  stroke-width: 3.5;
}
.tabmenu {
  width: 19px;
  height: 11px;
  margin: 29px 0 0 134px;
  fill: none;
  stroke: #f1f3f4;
  stroke-width: 2.6;
}

.toolbar {
  flex: none;
  height: 74px;
  display: flex;
  align-items: center;
  padding: 0 0 2px 15px;
  box-sizing: border-box;
  background: #35363a;
  border-bottom: 2px solid #5b5d60;
}
.nav-back {
  width: 56px;
  height: 56px;
  flex: none;
  border-radius: 50%;
  background: #4a4b4f;
  display: flex;
  align-items: center;
  justify-content: center;
}
.nav-icon {
  width: 28px;
  height: 26px;
  fill: none;
  stroke: #f1f3f4;
  stroke-width: 2.6;
  flex: none;
}
.nav-fwd {
  margin-left: 23px;
  stroke: #8d8f93;
}
.nav-reload {
  height: 28px;
  margin-left: 36px;
}
.nav-reload .solid {
  fill: #f1f3f4;
  stroke: none;
}
.omnibox {
  flex: none;
  width: 2319px;
  height: 56px;
  margin-left: 30px;
  border-radius: 28px;
  background: #202124;
  display: flex;
  align-items: center;
  padding-left: 23px;
  box-sizing: border-box;
}
.info {
  width: 26px;
  height: 26px;
  fill: none;
  stroke: #b4b6b9;
  stroke-width: 2.4;
  flex: none;
}
.url {
  margin: 2px 0 0 20px;
  color: #f1f3f4;
  font-family: Roboto, Inter, sans-serif;
  font-size: 29.5px;
}
.url-dim {
  color: #9aa0a6;
}
.omni-share {
  width: 22px;
  height: 30px;
  margin-left: auto;
  fill: none;
  stroke: #b4b6b9;
  stroke-width: 2.2;
}
.omni-star {
  width: 30px;
  height: 29px;
  margin: 0 20px 0 38px;
  fill: none;
  stroke: #b4b6b9;
  stroke-width: 2.6;
}
.ext-video { width: 32px; height: 28px; margin-left: 29px; flex: none; }
.ext-puzzle { width: 30px; height: 30px; margin-left: 34px; flex: none; }
.ext-side { width: 28px; height: 28px; margin-left: 34px; flex: none; }
.avatar {
  width: 44px;
  height: 44px;
  flex: none;
  margin-left: 28px;
  border-radius: 50%;
  background: #876f64;
  color: #fff;
  font-size: 24px;
  line-height: 44px;
  text-align: center;
}
.kebab {
  width: 6px;
  height: 26px;
  flex: none;
  margin-left: 39px;
  fill: #f1f3f4;
}

/* the page itself */
.page {
  flex: 1;
  position: relative;
  display: flex;
  flex-direction: column;
  min-height: 0;
  background: #fff;
  font-family: Lato, sans-serif;
}
.navbar {
  flex: none;
  height: 141px;
  background: #5ab89c;
  display: flex;
  align-items: center;
  padding: 0 62px 0 33px;
  box-sizing: border-box;
}
.navbar-brand {
  color: #fff;
  font-size: 38px;
  letter-spacing: -0.3px;
  margin-top: -3px;
}
.navbar-icons {
  margin-left: auto;
  display: flex;
  align-items: center;
  gap: 66px;
  margin-top: -4px;
}
.icon-save {
  width: 42px;
  height: 48px;
  fill: #f2f2f2;
}
.icon-plus {
  width: 42px;
  height: 42px;
  fill: #f2f2f2;
}
.content {
  flex: 1;
  display: flex;
  min-height: 0;
}
.sidebar {
  flex: none;
  width: 926px;
  border-right: 2px solid #dfdfdf;
  padding: 0 0 0 2px;
}
.list-group {
  list-style: none;
  margin: 0;
  padding: 0;
}
.list-group-item {
  height: 127px;
  box-sizing: border-box;
  padding: 38px 0 0 40px;
  font-size: 30px;
  letter-spacing: -0.3px;
  line-height: 48px;
  color: #212529;
  border-bottom: 2px solid #dfdfdf;
  border-radius: 0 0 6px 6px;
}
.note {
  flex: 1;
  padding-left: 64px;
  color: #000;
}
.note-title {
  margin: 18px 0 0;
  font-size: 96px;
  font-weight: 400;
  letter-spacing: 0.4px;
  line-height: 1.2;
}
.note-text {
  margin: 23px 0 0;
  font-size: 30px;
  line-height: 45px;
}
.page-fade {
  position: absolute;
  left: 0;
  right: 0;
  bottom: 0;
  height: 70px;
  background: linear-gradient(180deg, rgba(215, 215, 215, 0), rgba(215, 215, 215, 0.85));
  -webkit-mask-image: linear-gradient(90deg, transparent 0, #000 180px, #000 2700px, transparent 100%);
  mask-image: linear-gradient(90deg, transparent 0, #000 180px, #000 2700px, transparent 100%);
}

/* dock */
.dock {
  flex: none;
  width: 2746px;
  height: 101px;
  margin: 1px 0 0 67px;
  padding-left: 3.4px;
  box-sizing: border-box;
  display: flex;
  background: #1c2326;
  border: 2px solid #3c4244;
  border-radius: 26px;
}
.slot {
  flex: none;
  width: 83.2px;
  display: flex;
  flex-direction: column;
  align-items: center;
}
.ic {
  height: 82px;
  margin-top: 4.5px;
  display: flex;
  align-items: center;
}
.ic > svg {
  display: block;
  width: 64px;
  height: 64px;
}
.ic > .ic-over { overflow: visible; }
.ic > .ic-zoom { width: 71px; height: 72px; }
.ic > .ic-mysql { width: 76px; height: 78px; }
.ic > .ic-file { width: 53px; height: 72px; }
.ic > .ic-shot { width: 76px; height: 72px; }
.ic > .ic-trash { width: 57px; height: 74px; }
.dot {
  display: block;
  width: 7px;
  height: 7px;
  margin-top: 2px;
  border-radius: 50%;
  background: #9da1a3;
}
.dot-off {
  background: transparent;
}
.dock-sep {
  flex: none;
  width: 2px;
  height: 72px;
  margin: 12px 18px 0 17px;
  background: #55595b;
}
.dock-sep-wide {
  margin-right: 20px;
}
.cal-month { font: 600 11px Inter, sans-serif; fill: #fff; text-anchor: middle; }
.cal-day { font: 300 38px Inter, sans-serif; fill: #2a2a2a; text-anchor: middle; }
.tv-label { font: 500 26px Inter, sans-serif; fill: #fff; }
.dock-badge { font: 500 19px Inter, sans-serif; fill: #fff; text-anchor: middle; }
.help-mark { font: 300 84px Lato, sans-serif; fill: #9a9c9e; text-anchor: middle; }
```
